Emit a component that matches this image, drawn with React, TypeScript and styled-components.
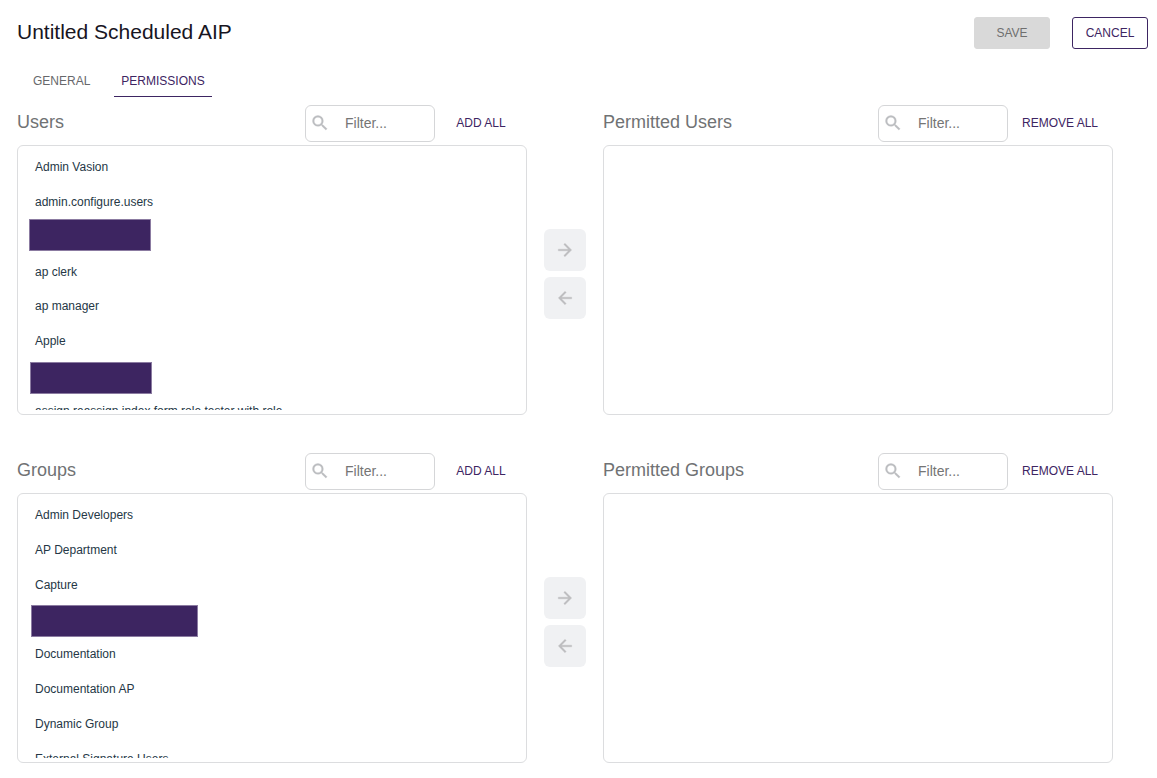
import React, { useId } from 'react';
import styled, { createGlobalStyle } from 'styled-components';

const GlobalStyle = createGlobalStyle`
  *, *::before, *::after { box-sizing: border-box; }
  body {
    margin: 0;
    background: #fff;
    color: #253746;
    font-family: "Liberation Sans", Arial, sans-serif;
    font-size: 12px;
  }
`;

const Page = styled.div`
  display: flex;
  flex-direction: column;
  padding: 17px 9px 15px 17px;
`;

const Header = styled.header`
  display: flex;
  align-items: flex-start;
  justify-content: space-between;
  height: 32px;
`;

const Title = styled.h1`
  margin: 0;
  font-size: 21px;
  line-height: 30px;
  font-weight: 400;
  color: #18151f;
`;

const Actions = styled.div`
  display: flex;
  gap: 22px;
`;

const ActionButton = styled.button<{ $outlined?: boolean }>`
  height: 32px;
  min-width: 76px;
  padding: 0 12px;
  border: 1px solid ${p => (p.$outlined ? '#3d2562' : '#d9d9d9')};
  border-radius: 3px;
  background: ${p => (p.$outlined ? '#fff' : '#d9d9d9')};
  color: ${p => (p.$outlined ? '#3d2562' : '#6f6f6f')};
  font: 12px/16px "Liberation Sans", Arial, sans-serif;
  text-transform: uppercase;
`;

const Tabs = styled.nav`
  display: flex;
  gap: 17px;
  margin: 16px 0 8px;
  padding-left: 9px;
`;

const Tab = styled.button<{ $active?: boolean }>`
  height: 32px;
  padding: 0 7px;
  border: 0;
  border-bottom: 1px solid ${p => (p.$active ? '#3d2562' : 'transparent')};
  background: none;
  color: ${p => (p.$active ? '#3d2562' : '#67686b')};
  font: 12px/16px "Liberation Sans", Arial, sans-serif;
  text-transform: uppercase;
`;

const Sections = styled.main`
  display: flex;
  flex-direction: column;
  gap: 38px;
  padding-right: 35px;
`;

const Transfer = styled.section`
  display: grid;
  grid-template-columns: minmax(0, 1fr) 42px minmax(0, 1fr);
  column-gap: 17px;
`;

const Panel = styled.div`
  display: flex;
  flex-direction: column;
  gap: 3px;
`;

const PanelHeader = styled.div`
  display: flex;
  align-items: center;
  height: 37px;
  padding-right: 7px;
`;

const PanelTitle = styled.h2`
  flex: 1;
  margin: 0;
  padding-bottom: 4px;
  font-size: 18px;
  line-height: 20px;
  font-weight: 400;
  color: #707274;
`;

const FilterBox = styled.label`
  display: flex;
  align-items: center;
  gap: 15px;
  width: 130px;
  height: 37px;
  padding: 0 4px 2px;
  border: 1px solid #d5d6d8;
  border-radius: 6px;
  color: #bbbdc0;

  svg { flex: none; }
`;

const FilterInput = styled.input`
  flex: 1;
  min-width: 0;
  padding: 0;
  border: 0;
  outline: 0;
  background: none;
  color: #253746;
  font: 14px/20px "Liberation Sans", Arial, sans-serif;

  &::placeholder { color: #757575; opacity: 1; }
`;

const LinkButton = styled.button<{ $wide?: boolean }>`
  width: ${p => (p.$wide ? '92px' : '78px')};
  margin-left: ${p => (p.$wide ? '6px' : '7px')};
  height: 32px;
  padding: 0 0 2px;
  border: 0;
  background: none;
  color: #3d2562;
  font: 12px/16px "Liberation Sans", Arial, sans-serif;
  text-align: center;
  text-transform: uppercase;
`;

const ListBox = styled.div`
  height: 270px;
  padding: 4px;
  border: 1px solid #dcdddf;
  border-radius: 6px;
`;

const Scroller = styled.div`
  position: relative;
  height: 100%;
  overflow-y: auto;
  scrollbar-width: none;
`;

const List = styled.ul`
  display: grid;
  grid-auto-rows: 1fr;
  height: 278px;
  margin: 0;
  padding: 0;
  list-style: none;
`;

const Item = styled.li`
  display: flex;
  align-items: center;
  padding: 0 13px;
  line-height: 16px;
`;

const Redaction = styled.span<{ $left: number; $top: number; $width: number }>`
  position: absolute;
  left: ${p => p.$left}px;
  top: ${p => p.$top}px;
  width: ${p => p.$width}px;
  height: 32px;
  border: 1px solid #8b7ba1;
  background: #3d2561;
`;

const Movers = styled.div`
  display: flex;
  flex-direction: column;
  gap: 6px;
  padding-top: 124px;
`;

const MoveButton = styled.button`
  display: grid;
  place-items: center;
  width: 42px;
  height: 42px;
  padding: 0;
  border: 0;
  border-radius: 6px;
  background: #f0f1f3;
  color: #bdbdbf;
`;

const SearchIcon = () => (
  <svg width="20" height="20" viewBox="0 0 24 24" fill="currentColor" stroke="currentColor" strokeWidth="0.4" aria-hidden="true">
    <path d="M15.5 14h-.79l-.28-.27A6.47 6.47 0 0 0 16 9.5 6.5 6.5 0 1 0 9.500 16c1.610 0 3.090-.59 4.230-1.570l.27.28v.79l5 4.990L20.490 19l-4.990-5zm-6 0C7.010 14 5 11.990 5 9.500S7.010 5 9.500 5 14 7.010 14 9.500 11.990 14 9.500 14z" />
  </svg>
);

const Arrow = ({ back }: { back?: boolean }) => (
  <svg width="20" height="20" viewBox="0 0 24 24" fill="currentColor" stroke="currentColor" strokeWidth="0.4" aria-hidden="true">
    <path
      d={
        back
          ? 'M20 11H7.830l5.590-5.590L12 4l-8 8 8 8 1.410-1.410L7.830 13H20v-2z'
          : 'M12 4l-1.410 1.410L16.170 11H4v2h12.170l-5.580 5.590L12 20l8-8z'
      }
    />
  </svg>
);

type Cover = { left: number; top: number; width: number };

interface PickerProps {
  title: string;
  action: string;
  wide?: boolean;
  items?: string[];
  covers?: Cover[];
}

function Picker({ title, action, wide, items = [], covers = [] }: PickerProps) {
  const id = useId();
  return (
    <Panel>
      <PanelHeader>
        <PanelTitle>{title}</PanelTitle>
        <FilterBox htmlFor={id}>
          <SearchIcon />
          <FilterInput id={id} type="text" placeholder="Filter..." aria-label={`Filter ${title}`} />
        </FilterBox>
        <LinkButton type="button" $wide={wide}>{action}</LinkButton>
      </PanelHeader>
      <ListBox>
        {items.length > 0 && (
          <Scroller>
            <List>
              {items.map((item, i) => <Item key={i}>{item}</Item>)}
            </List>
            {covers.map((c, i) => (
              <Redaction key={i} $left={c.left} $top={c.top} $width={c.width} />
            ))}
          </Scroller>
        )}
      </ListBox>
    </Panel>
  );
}

const users = [
  'Admin Vasion',
  'admin.configure.users',
  '',
  'ap clerk',
  'ap manager',
  'Apple',
  '',
  'assign reassign index form role tester with role',
];

const groups = [
  'Admin Developers',
  'AP Department',
  'Capture',
  '',
  'Documentation',
  'Documentation AP',
  'Dynamic Group',
  'External Signature Users',
];

const userCovers: Cover[] = [
  { left: 7, top: 69, width: 122 },
  { left: 8, top: 212, width: 122 },
];

const groupCovers: Cover[] = [{ left: 9, top: 107, width: 167 }];

const MoveControls = ({ kind }: { kind: string }) => (
  <Movers>
    <MoveButton type="button" aria-label={`Permit selected ${kind}`}><Arrow /></MoveButton>
    <MoveButton type="button" aria-label={`Remove selected ${kind}`}><Arrow back /></MoveButton>
  </Movers>
);

export default function App() {
  return (
    <Page>
      <GlobalStyle />
      <Header>
        <Title>Untitled Scheduled AIP</Title>
        <Actions>
          <ActionButton type="button" disabled>Save</ActionButton>
          <ActionButton type="button" $outlined>Cancel</ActionButton>
        </Actions>
      </Header>
      <Tabs>
        <Tab type="button">General</Tab>
        <Tab type="button" $active aria-current="page">Permissions</Tab>
      </Tabs>
      <Sections>
        <Transfer>
          <Picker title="Users" action="Add all" items={users} covers={userCovers} />
          <MoveControls kind="users" />
          <Picker title="Permitted Users" action="Remove all" wide />
        </Transfer>
        <Transfer>
          <Picker title="Groups" action="Add all" items={groups} covers={groupCovers} />
          <MoveControls kind="groups" />
          <Picker title="Permitted Groups" action="Remove all" wide />
        </Transfer>
      </Sections>
    </Page>
  );
}
